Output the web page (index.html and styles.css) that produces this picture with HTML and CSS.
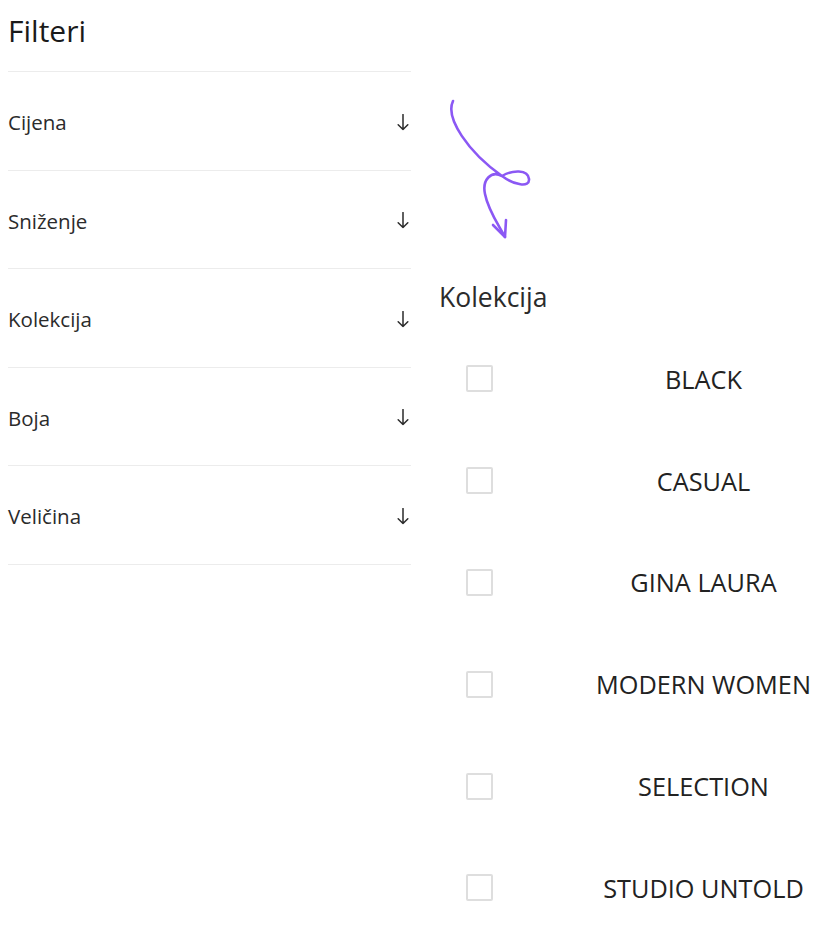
FILE: index.html
```html
<!DOCTYPE html>
<html lang="hr">
<head>
<meta charset="utf-8">
<title>Filteri</title>
<link rel="stylesheet" href="styles.css">
</head>
<body>
<div class="page">
  <aside class="sidebar">
    <h1 class="title">Filteri</h1>
    <ul class="filters">
      <li class="filter"><span>Cijena</span><svg class="down" viewBox="0 0 12 17" width="12" height="17"><path d="M6 0.5 V15.5 M1.2 10.8 L6 15.5 L10.8 10.8"/></svg></li>
      <li class="filter"><span>Sniženje</span><svg class="down" viewBox="0 0 12 17" width="12" height="17"><path d="M6 0.5 V15.5 M1.2 10.8 L6 15.5 L10.8 10.8"/></svg></li>
      <li class="filter"><span>Kolekcija</span><svg class="down" viewBox="0 0 12 17" width="12" height="17"><path d="M6 0.5 V15.5 M1.2 10.8 L6 15.5 L10.8 10.8"/></svg></li>
      <li class="filter"><span>Boja</span><svg class="down" viewBox="0 0 12 17" width="12" height="17"><path d="M6 0.5 V15.5 M1.2 10.8 L6 15.5 L10.8 10.8"/></svg></li>
      <li class="filter"><span>Veličina</span><svg class="down" viewBox="0 0 12 17" width="12" height="17"><path d="M6 0.5 V15.5 M1.2 10.8 L6 15.5 L10.8 10.8"/></svg></li>
    </ul>
  </aside>
  <main class="panel">
    <svg class="squiggle" viewBox="0 0 100 160" width="100" height="160">
      <path d="M13 11 C5 28 28 62 62 86 C72 80 88 79 89 89 C90 98 74 95 62 86 C51 80 42 90 45 104 C48 120 58 134 65 147"/>
      <path d="M53 135 L65 147 L66 130"/>
    </svg>
    <h2 class="heading">Kolekcija</h2>
    <ul class="options">
      <li class="option"><span class="box"></span><span class="label">BLACK</span></li>
      <li class="option"><span class="box"></span><span class="label">CASUAL</span></li>
      <li class="option"><span class="box"></span><span class="label">GINA LAURA</span></li>
      <li class="option"><span class="box"></span><span class="label">MODERN WOMEN</span></li>
      <li class="option"><span class="box"></span><span class="label">SELECTION</span></li>
      <li class="option"><span class="box"></span><span class="label">STUDIO UNTOLD</span></li>
    </ul>
  </main>
</div>
</body>
</html>
```

FILE: styles.css
```css
* { box-sizing: border-box; }
html, body {
  margin: 0;
  padding: 0;
  background: #fff;
}
body {
  font-family: "Open Sans", "Noto Sans", sans-serif;
  color: #222;
}
.page {
  display: flex;
  padding-left: 8px;
}
.sidebar {
  width: 403px;
  flex: none;
}
.title {
  margin: 0;
  padding: 11px 0 20px;
  font-size: 30px;
  line-height: 40px;
  font-weight: 400;
  color: #1a1a1a;
  border-bottom: 1px solid #ececec;
}
.filters {
  list-style: none;
  margin: 0;
  padding: 0;
}
.filter {
  display: flex;
  justify-content: space-between;
  align-items: center;
  padding: 36px 2px 33.5px 0;
  font-size: 20.5px;
  line-height: 28px;
  color: #2b2b2b;
  border-bottom: 1px solid #ececec;
}
.down {
  fill: none;
  stroke: #2b2b2b;
  stroke-width: 1.5;
  stroke-linecap: round;
  stroke-linejoin: round;
}
.panel {
  flex: 1;
  margin-left: 29px;
  padding-top: 90px;
}
.squiggle {
  display: block;
  fill: none;
  stroke: #8b58f4;
  stroke-width: 2.6;
  stroke-linecap: round;
  stroke-linejoin: round;
}
.heading {
  margin: 29px 0 0 -1px;
  font-size: 26.5px;
  line-height: 36px;
  font-weight: 400;
  color: #2b2b2b;
}
.options {
  list-style: none;
  margin: 13px 0 0;
  padding: 0;
}
.option {
  display: grid;
  grid-template-columns: 128px 1fr;
  align-items: center;
  height: 101.8px;
}
.box {
  width: 27px;
  height: 27px;
  margin-left: 26px;
  border: 2px solid #dedede;
  border-radius: 2px;
}
.label {
  text-align: center;
  font-size: 25.3px;
  line-height: 34px;
  color: #222;
}
```
